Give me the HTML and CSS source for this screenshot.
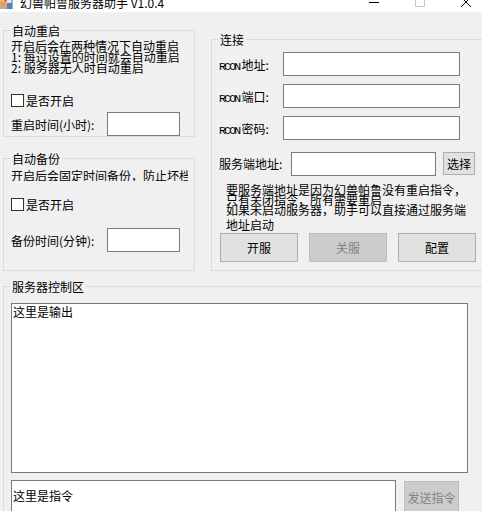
FILE: index.html
```html
<!DOCTYPE html>
<html lang="zh-CN">
<head>
<meta charset="utf-8">
<title>幻兽帕鲁服务器助手 V1.0.4</title>
<link rel="stylesheet" href="styles.css">
</head>
<body>
<div class="titlebar">
  <svg class="appicon" width="13" height="14" viewBox="0 0 13 14">
    <rect x="0" y="0" width="13" height="14" fill="#8fb8e0"/>
    <rect x="0" y="0" width="6" height="7" fill="#f2c14a"/>
    <rect x="6" y="2" width="5" height="6" fill="#f5e3b8"/>
    <rect x="1" y="7" width="5" height="7" fill="#e8a05a"/>
    <rect x="7" y="8" width="5" height="6" fill="#5a7fbf"/>
    <rect x="4" y="4" width="3" height="3" fill="#e86a8a"/>
  </svg>
  <span class="title">幻兽帕鲁服务器助手 V1.0.4</span>
  <div class="winctl">
    <span class="wbtn"><svg width="10" height="10" viewBox="0 0 10 10"><path d="M0 5.5H10" stroke="#000" stroke-width="1"/></svg></span>
    <span class="wbtn"><svg width="10" height="10" viewBox="0 0 10 10"><rect x="0.5" y="0.5" width="9" height="9" fill="none" stroke="#c8c8c8" stroke-width="1"/></svg></span>
    <span class="wbtn"><svg width="10" height="10" viewBox="0 0 10 10"><path d="M0 0L10 10M10 0L0 10" stroke="#000" stroke-width="1"/></svg></span>
  </div>
</div>

<div class="client">
  <div class="top">
    <div class="leftcol">
      <fieldset class="grp g-restart">
        <legend>自动重启</legend>
        <div class="desc">开启后会在两种情况下自动重启<br>1: 每过设置的时间就会自动重启<br>2: 服务器无人时自动重启</div>
        <label class="check-row c1"><input type="checkbox" class="cb">是否开启</label>
        <div class="field-row f1"><span class="flabel">重启时间(小时):</span><input type="text" class="num"></div>
      </fieldset>
      <fieldset class="grp g-backup">
        <legend>自动备份</legend>
        <div class="desc clip">开启后会固定时间备份，防止坏档</div>
        <label class="check-row c2"><input type="checkbox" class="cb">是否开启</label>
        <div class="field-row f2"><span class="flabel">备份时间(分钟):</span><input type="text" class="num"></div>
      </fieldset>
    </div>

    <fieldset class="grp g-conn">
      <legend>连接</legend>
      <div class="rrow r1"><span class="rlabel"><span class="rc">RCON</span>地址:</span><input type="text" class="rin"></div>
      <div class="rrow"><span class="rlabel"><span class="rc">RCON</span>端口:</span><input type="text" class="rin"></div>
      <div class="rrow"><span class="rlabel"><span class="rc">RCON</span>密码:</span><input type="text" class="rin"></div>
      <div class="rrow srv"><span class="slabel">服务端地址:</span><input type="text" class="sin"><button class="btn pick">选择</button></div>
      <div class="note">
        <div>要服务端地址是因为幻兽帕鲁没有重启指令，<br>只有关闭指令，所有需要重启<br>如果未启动服务器，助手可以直接通过服务端</div>
        <div class="note-last">地址启动</div>
      </div>
      <div class="actions">
        <button class="btn act">开服</button>
        <button class="btn act" disabled>关服</button>
        <button class="btn act">配置</button>
      </div>
    </fieldset>
  </div>

  <fieldset class="grp g-ctrl">
    <legend>服务器控制区</legend>
    <textarea class="output">这里是输出</textarea>
    <div class="cmd-row">
      <textarea class="cmd">这里是指令</textarea>
      <button class="btn send" disabled>发送指令</button>
    </div>
  </fieldset>
</div>
</body>
</html>
```

FILE: styles.css
```css
html, body {
  margin: 0;
  padding: 0;
}
body {
  width: 482px;
  height: 511px;
  overflow: hidden;
  background: #f0f0f0;
  color: #000;
  font-family: "Noto Sans CJK SC", "Noto Sans", sans-serif;
  font-size: 12px;
}

/* title bar */
.titlebar {
  display: flex;
  align-items: flex-start;
  height: 12px;
  background: #fff;
  overflow: hidden;
}
.appicon {
  flex: none;
  margin-top: -5px;
}
.title {
  margin-left: 7px;
  margin-top: -5px;
  line-height: 16px;
  white-space: nowrap;
}
.winctl {
  display: flex;
  margin-left: auto;
  margin-right: -7px;
}
.wbtn {
  width: 46px;
  height: 12px;
  display: flex;
  justify-content: center;
}
.wbtn svg {
  margin-top: -3px;
}

/* client */
.client {
  padding: 11px 0 0 3px;
}
.top {
  display: flex;
  align-items: stretch;
}
.leftcol {
  width: 192px;
  flex: none;
  display: flex;
  flex-direction: column;
  gap: 14px;
}

fieldset.grp {
  margin: 0;
  padding: 0 7px;
  border: 1px solid #dcdcdc;
  min-width: 0;
}
fieldset.grp legend {
  margin-left: -1px;
  padding: 0 2px;
  line-height: 15px;
  font-size: 12px;
}

.desc {
  line-height: 11px;
  white-space: nowrap;
}
.g-restart .desc { padding-top: 2px; }
.g-backup .desc { padding-top: 4px; }
.desc.clip {
  width: 177px;
  overflow: hidden;
}

.check-row {
  display: flex;
  align-items: center;
  height: 13px;
  line-height: 13px;
}
.c1 { margin-top: 21px; }
.c2 { margin-top: 17px; }
.cb {
  appearance: none;
  -webkit-appearance: none;
  margin: 0 2px 0 0;
  width: 13px;
  height: 13px;
  box-sizing: border-box;
  border: 1px solid #333;
  background: #fff;
  flex: none;
}

.field-row {
  display: flex;
  align-items: center;
}
.f1 { margin-top: 5px; }
.f2 { margin-top: 17px; }
.flabel {
  width: 96px;
  flex: none;
  white-space: nowrap;
}
.num {
  width: 73px;
  height: 24px;
  box-sizing: border-box;
  border: 1px solid #7a7a7a;
  background: #fff;
  padding: 0 2px;
  margin: 0;
  font: inherit;
  outline: none;
}
.g-restart { padding-bottom: 6px; }
.g-backup {
  flex: 1;
  padding-bottom: 12px;
}

/* connection group */
.g-conn {
  margin-left: 16px !important;
  margin-top: 9px !important;
  width: 290px;
  flex: none;
  padding-bottom: 8px !important;
}
.rrow {
  display: flex;
  align-items: center;
  margin-top: 8px;
}
.rrow.r1 { margin-top: 5px; }
.rlabel {
  width: 64px;
  flex: none;
  white-space: nowrap;
}
.rc {
  font-family: "Liberation Mono", monospace;
  font-size: 11.5px;
  letter-spacing: -1.8px;
  margin-right: 2px;
}
.rin, .sin {
  height: 24px;
  box-sizing: border-box;
  border: 1px solid #7a7a7a;
  background: #fff;
  margin: 0;
  padding: 0 2px;
  font: inherit;
  outline: none;
}
.rin { width: 177px; }
.rrow.srv {
  margin-top: 12px;
  align-items: flex-start;
}
.slabel {
  width: 72px;
  flex: none;
  line-height: 24px;
  white-space: nowrap;
}
.sin { width: 145px; }

.btn {
  margin: 0;
  padding: 0;
  box-sizing: border-box;
  background: #e1e1e1;
  border: 1px solid #adadad;
  color: #000;
  font-family: "Noto Sans CJK SC", sans-serif;
  font-size: 12px;
}
.btn:disabled {
  background: #cccccc;
  border-color: #bfbfbf;
  color: #838383;
}
.pick {
  width: 32px;
  height: 23px;
  margin-left: 7px;
  line-height: 20px;
}

.note {
  padding-left: 7px;
  margin-top: 9px;
  line-height: 10px;
  white-space: nowrap;
}
.note-last {
  margin-top: 5px;
}
.actions {
  display: flex;
  gap: 11px;
  margin: 3px 0 0 1px;
}
.act {
  width: 78px;
  height: 29px;
}

/* control group */
.g-ctrl {
  margin-top: 8px !important;
  margin-right: -20px !important;
}
.output {
  display: block;
  margin: 9px 0 0 0;
  width: 457px;
  height: 170px;
  box-sizing: border-box;
  border: 1px solid #7a7a7a;
  background: #fff;
  padding: 0 1px;
  font: inherit;
  line-height: 16px;
  resize: none;
  outline: none;
  overflow: hidden;
}
.cmd-row {
  display: flex;
  align-items: flex-start;
  margin-top: 7px;
}
.cmd {
  display: block;
  width: 385px;
  height: 34px;
  box-sizing: border-box;
  border: 1px solid #7a7a7a;
  background: #fff;
  margin: 0;
  padding: 7px 1px 0;
  font: inherit;
  line-height: 16px;
  resize: none;
  outline: none;
  overflow: hidden;
}
.send {
  width: 55px;
  height: 32px;
  margin: 1px 0 0 8px;
}
```
